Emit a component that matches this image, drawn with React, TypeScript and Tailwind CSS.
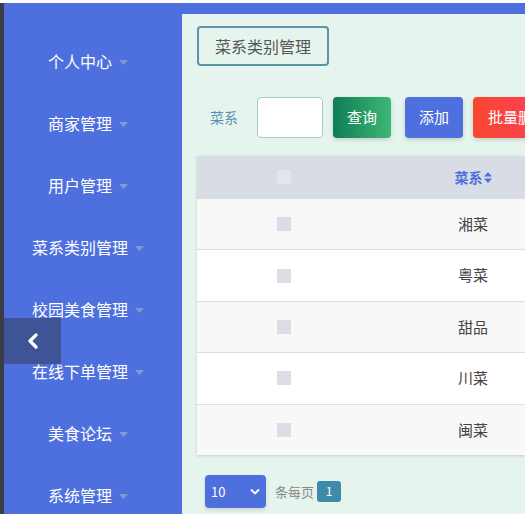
import React from "react";

const menu = ["个人中心", "商家管理", "用户管理", "菜系类别管理", "校园美食管理", "在线下单管理", "美食论坛", "系统管理"];
const rows = ["湘菜", "粤菜", "甜品", "川菜", "闽菜"];

function Caret() {
  return (
    <svg width="9" height="5" viewBox="0 0 9 5" className="ml-[7px] mt-[2px] shrink-0">
      <path d="M0 0 L9 0 L4.5 5 Z" fill="#8797cf" />
    </svg>
  );
}

export default function App() {
  const font = { fontFamily: '"Noto Sans CJK SC", "Noto Sans", sans-serif' };
  return (
    <div className="w-[525px] h-[514px] overflow-hidden bg-white pt-[3px] relative" style={font}>
      <div className="flex h-[511px]">
        <div className="w-[4px] shrink-0 bg-[#3b3d45]" />
        <div className="w-[178px] shrink-0 bg-[#4e6fde] pt-[27px] pr-[10px] flex flex-col overflow-hidden">
          {menu.map((m) => (
            <div key={m} className="h-[62px] shrink-0 flex items-center justify-center text-white text-[16px] whitespace-nowrap">
              <span>{m}</span>
              <Caret />
            </div>
          ))}
        </div>
        <div className="flex-1 flex flex-col min-w-0">
          <div className="h-[11px] shrink-0 bg-[#4e6fde]" />
          <div className="flex-1 bg-[#e6f4ee] pl-[15px] pt-[12px] overflow-hidden">
            <div className="w-[132px] h-[40px] border-2 border-[#5d93a6] rounded-[4px] flex items-center justify-center text-[16px] text-[#555]">
              菜系类别管理
            </div>
            <div className="flex items-center mt-[31px] h-[41px] w-[600px]">
              <span className="ml-[13px] shrink-0 text-[14px] text-[#5a8fb0] whitespace-nowrap">菜系</span>
              <div className="ml-[19px] shrink-0 w-[66px] h-[41px] bg-white border border-[#a9c9d3] rounded-[4px]" />
              <button className="ml-[10px] shrink-0 w-[58px] h-[41px] rounded-[4px] text-white text-[15px] bg-gradient-to-r from-[#0b7e56] to-[#3cb775] shadow-[0_2px_4px_rgba(0,0,0,0.15)]">
                查询
              </button>
              <button className="ml-[14px] shrink-0 w-[58px] h-[41px] rounded-[4px] text-white text-[15px] bg-[#4e6fde] shadow-[0_2px_4px_rgba(0,0,0,0.15)]">
                添加
              </button>
              <button className="ml-[10px] w-[90px] shrink-0 h-[41px] rounded-[4px] text-white text-[15px] bg-gradient-to-r from-[#f7472d] to-[#ff3b5c] shadow-[0_2px_4px_rgba(0,0,0,0.15)] whitespace-nowrap">
                批量删除
              </button>
            </div>
            <div className="mt-[18px] w-[700px] shadow-[0_1px_3px_rgba(0,0,0,0.15)]">
              <div className="flex h-[42px] bg-[#d8dde5] items-center">
                <div className="w-[174px] flex justify-center">
                  <div className="w-[14px] h-[14px] bg-[#e2e6ec]" />
                </div>
                <div className="w-[204px] flex justify-center items-center text-[14px] font-bold text-[#4e6fde]">
                  菜系
                  <svg width="8" height="11" viewBox="0 0 8 11" className="ml-[1px]">
                    <path d="M0 4.5 L4 0 L8 4.5 Z M0 6.5 L8 6.5 L4 11 Z" fill="#4e6fde" />
                  </svg>
                </div>
                <div className="flex-1" />
              </div>
              {rows.map((r, i) => (
                <div
                  key={r}
                  className={`flex h-[51.4px] items-center border-t border-[#dedede] ${i % 2 === 0 ? "bg-[#f8f8f8]" : "bg-white"}`}
                >
                  <div className="w-[174px] flex justify-center">
                    <div className="w-[14px] h-[14px] bg-[#dcdde4]" />
                  </div>
                  <div className="w-[204px] text-center text-[15px] text-[#444]">{r}</div>
                  <div className="flex-1" />
                </div>
              ))}
            </div>
            <div className="flex items-center mt-[20px] ml-[8px]">
              <div className="w-[61px] h-[33px] rounded-[4px] bg-[#4e6fde] flex items-center justify-between px-[6px] text-white text-[13px] shadow-[0_2px_4px_rgba(0,0,0,0.12)]">
                <span>10</span>
                <svg width="10" height="7" viewBox="0 0 10 7">
                  <path d="M1 1.5 L5 5.5 L9 1.5" stroke="white" strokeWidth="1.8" fill="none" />
                </svg>
              </div>
              <span className="ml-[9px] text-[13px] text-[#888]">条每页</span>
              <div className="ml-[3px] w-[24px] h-[21px] rounded-[3px] bg-[#3f8aa8] text-white text-[12px] flex items-center justify-center">
                1
              </div>
            </div>
          </div>
        </div>
      </div>
      <div className="absolute left-[4px] top-[318px] w-[57px] h-[46px] bg-[#3f5497] flex items-center justify-center">
        <svg width="12" height="16" viewBox="0 0 12 16">
          <path d="M9 2 L3 8 L9 14" stroke="white" strokeWidth="3.2" fill="none" strokeLinecap="round" strokeLinejoin="round" />
        </svg>
      </div>
    </div>
  );
}
